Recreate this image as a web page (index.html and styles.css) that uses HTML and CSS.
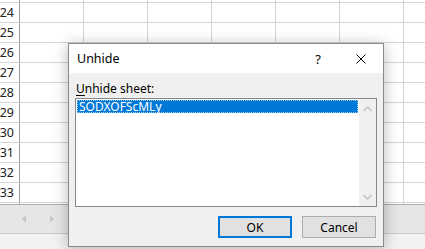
FILE: index.html
```html
<!DOCTYPE html>
<html lang="en">
<head>
  <meta charset="UTF-8" />
  <title>Unhide</title>
  <link rel="stylesheet" href="styles.css">
</head>
<body>
  <div class="sheet">
    <div class="row top"><div class="hdr"></div><div></div><div></div><div></div><div></div><div></div><div></div><div></div></div>
    <div class="row"><div class="hdr">24</div><div></div><div></div><div></div><div></div><div></div><div></div><div></div></div>
    <div class="row"><div class="hdr">25</div><div></div><div></div><div></div><div></div><div></div><div></div><div></div></div>
    <div class="row"><div class="hdr">26</div><div></div><div></div><div></div><div></div><div></div><div></div><div></div></div>
    <div class="row"><div class="hdr">27</div><div></div><div></div><div></div><div></div><div></div><div></div><div></div></div>
    <div class="row"><div class="hdr">28</div><div></div><div></div><div></div><div></div><div></div><div></div><div></div></div>
    <div class="row"><div class="hdr">29</div><div></div><div></div><div></div><div></div><div></div><div></div><div></div></div>
    <div class="row"><div class="hdr">30</div><div></div><div></div><div></div><div></div><div></div><div></div><div></div></div>
    <div class="row"><div class="hdr">31</div><div></div><div></div><div></div><div></div><div></div><div></div><div></div></div>
    <div class="row"><div class="hdr">32</div><div></div><div></div><div></div><div></div><div></div><div></div><div></div></div>
    <div class="row"><div class="hdr">33</div><div></div><div></div><div></div><div></div><div></div><div></div><div></div></div>
    <div class="row last"><div class="hdr"></div><div></div><div></div><div></div><div></div><div></div><div></div><div></div></div>
  </div>
  <div class="tabbar">
    <span class="nav prev"></span>
    <span class="nav next"></span>
  </div>
  <div class="statusbar"></div>

  <div class="dialog">
    <div class="titlebar">
      <span class="title">Unhide</span>
      <span class="help">?</span>
      <span class="close">
        <svg width="10" height="10" viewBox="0 0 10 10"><path d="M0.5 0.5 L9.5 9.5 M9.5 0.5 L0.5 9.5" stroke="#000" stroke-width="1" fill="none"/></svg>
      </span>
    </div>
    <div class="content">
      <div class="label"><u>U</u>nhide sheet:</div>
      <div class="listbox">
        <div class="items">
          <div class="item selected">SODXOFScMLy</div>
        </div>
        <div class="vscroll">
          <svg width="9" height="6" viewBox="0 0 9 6"><path d="M0.5 5 L4.5 1 L8.5 5" stroke="#c2c2c2" stroke-width="1.5" fill="none"/></svg>
          <svg width="9" height="6" viewBox="0 0 9 6"><path d="M0.5 1 L4.5 5 L8.5 1" stroke="#c2c2c2" stroke-width="1.5" fill="none"/></svg>
        </div>
      </div>
      <div class="buttons">
        <button class="btn default">OK</button>
        <button class="btn">Cancel</button>
      </div>
    </div>
  </div>
</body>
</html>
```

FILE: styles.css
```css
body {
  margin: 0;
  width: 425px;
  height: 249px;
  overflow: hidden;
  background: #fff;
  font-family: "Noto Sans", "Open Sans", sans-serif;
  position: relative;
}

/* worksheet behind the dialog */
.sheet { background: #fff; overflow: hidden; }
.row {
  display: grid;
  grid-template-columns: 20px repeat(7, 64px);
  height: 20px;
  box-sizing: border-box;
  border-bottom: 1px solid #d4d4d4;
}
.row.top { height: 3px; }
.row.last { height: 1px; border-bottom: 0; }
.row > div { border-right: 1px solid #d4d4d4; }
.row > .hdr {
  border-right: 1px solid #9b9b9b;
  font-size: 12.5px;
  line-height: 19px;
  color: #222;
  text-align: right;
  padding-right: 5px;
  overflow: hidden;
  white-space: nowrap;
  direction: rtl;
}

.tabbar {
  height: 30px;
  box-sizing: border-box;
  background: #e6e6e6;
  border-top: 1px solid #ababab;
  border-bottom: 1px solid #c9c9c9;
  display: flex;
  align-items: center;
  gap: 24px;
  padding: 0 0 0 22px;
}
.nav {
  width: 0;
  height: 0;
  border-top: 4px solid transparent;
  border-bottom: 4px solid transparent;
}
.nav.prev { border-right: 4px solid #c6c6c6; }
.nav.next { border-left: 4px solid #c6c6c6; }
.statusbar {
  height: 15px;
  background: #f2f2f2;
}

/* dialog window */
.dialog {
  position: absolute;
  left: 68px;
  top: 43px;
  width: 316px;
  height: 204px;
  box-sizing: border-box;
  border: 1px solid #8a8a8a;
  background: #f0f0f0;
  box-shadow: 0 2px 14px rgba(0, 0, 0, 0.28);
  display: flex;
  flex-direction: column;
  font-size: 12px;
  color: #000;
}
.titlebar {
  height: 29px;
  background: #fff;
  display: flex;
  align-items: center;
  padding-left: 8px;
}
.title { flex: 1; font-size: 12.5px; }
.help { width: 40px; text-align: center; font-size: 13px; }
.close { width: 45px; display: flex; justify-content: center; }

.content {
  flex: 1;
  display: flex;
  flex-direction: column;
  padding: 8px 6px 8px 6px;
}
.label { padding-left: 1px; line-height: 15px; margin-bottom: 2px; }
.label u { text-underline-offset: 2px; }

.listbox {
  height: 109px;
  box-sizing: border-box;
  border: 1px solid #828790;
  background: #fff;
  display: flex;
}
.items { flex: 1; padding: 1px; }
.item {
  height: 13px;
  line-height: 13px;
  padding-left: 2px;
  white-space: nowrap;
}
.item.selected {
  background: #0078d7;
  color: #fff;
  outline: 1px dotted #9cc8f0;
  outline-offset: -1px;
}
.vscroll {
  width: 17px;
  background: #f0f0f0;
  display: flex;
  flex-direction: column;
  justify-content: space-between;
  align-items: center;
  padding: 7px 0 6px;
}

.buttons {
  margin-top: auto;
  display: flex;
  justify-content: flex-end;
  gap: 10px;
  padding-right: 1px;
}
.btn {
  width: 74px;
  height: 22px;
  box-sizing: border-box;
  background: #e1e1e1;
  border: 1px solid #adadad;
  font-family: inherit;
  font-size: 12px;
  color: #000;
  padding: 0;
}
.btn.default { border: 2px solid #0078d7; }
```
